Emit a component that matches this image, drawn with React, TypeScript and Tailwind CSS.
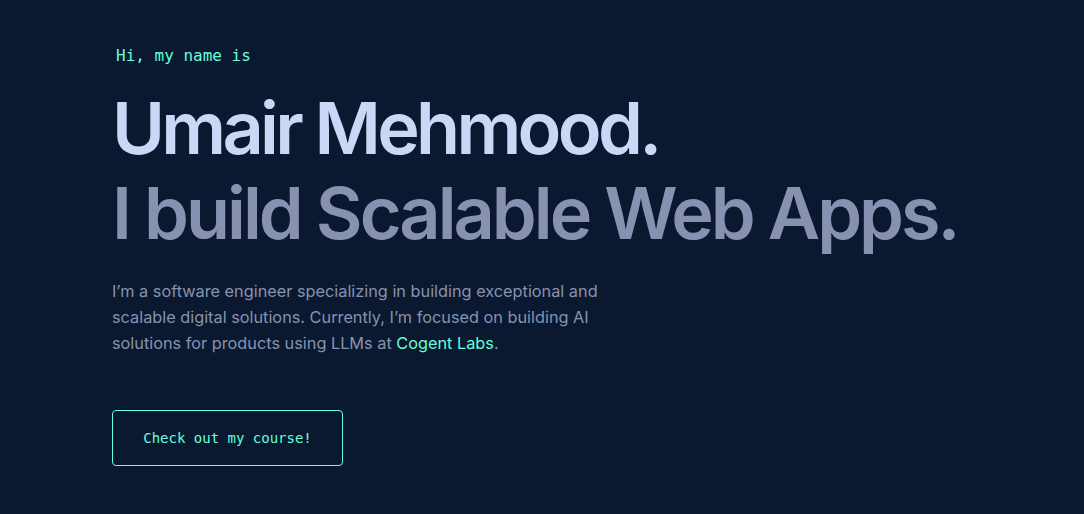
const App = () => {
  return (
    <div className="min-h-[514px] w-full bg-[#0a192f] pl-[112px] pt-[44px] font-['Inter',sans-serif]">
      <h1 className="pl-[4px] font-['DejaVu_Sans_Mono',monospace] text-[16px] leading-[24px] text-[#64ffda]">
        Hi, my name is
      </h1>
      <h2 className="mt-[17px] text-[72px] font-semibold leading-[85px] tracking-[-3.7px] text-[#ccd6f6]">
        Umair Mehmood.
      </h2>
      <h3 className="text-[72px] font-semibold leading-[85px] tracking-[-3px] text-[#8892b0]">
        I build Scalable Web Apps.
      </h3>
      <p className="mt-[23px] max-w-[510px] text-[16.3px] leading-[26px] text-[#8892b0]">
        I’m a software engineer specializing in building exceptional and scalable digital solutions.
        Currently, I’m focused on building AI solutions for products using LLMs at{' '}
        <a href="#" className="text-[#64ffda]">
          Cogent Labs
        </a>
        .
      </p>
      <button className="mt-[54px] h-[56px] w-[231px] rounded-[4px] border border-[#64ffda] font-['DejaVu_Sans_Mono',monospace] text-[14px] text-[#64ffda]">
        Check out my course!
      </button>
    </div>
  );
};

export default App;
